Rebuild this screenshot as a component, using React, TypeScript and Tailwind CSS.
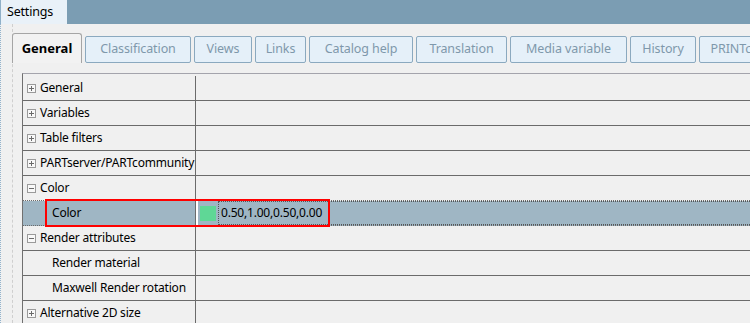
const tabs = [
  { label: "Classification", w: "w-[106px]" },
  { label: "Views", w: "w-[58px]" },
  { label: "Links", w: "w-[51px]" },
  { label: "Catalog help", w: "w-[104px]" },
  { label: "Translation", w: "w-[91px]" },
  { label: "Media variable", w: "w-[117px]" },
  { label: "History", w: "w-[66px]" },
  { label: "PRINTcatalog", w: "w-[100px]" },
];

type Row = {
  label: string;
  kind: "plus" | "minus" | "child";
  selected?: boolean;
  dottedBottom?: boolean;
};

const rows: Row[] = [
  { label: "General", kind: "plus" },
  { label: "Variables", kind: "plus" },
  { label: "Table filters", kind: "plus" },
  { label: "PARTserver/PARTcommunity", kind: "plus" },
  { label: "Color", kind: "minus", dottedBottom: true },
  { label: "Color", kind: "child", selected: true },
  { label: "Render attributes", kind: "minus" },
  { label: "Render material", kind: "child" },
  { label: "Maxwell Render rotation", kind: "child" },
  { label: "Alternative 2D size", kind: "plus" },
];

function Expander({ open }: { open: boolean }) {
  return (
    <svg width="9" height="9" viewBox="0 0 9 9" className="shrink-0">
      <rect x="0.5" y="0.5" width="8" height="8" fill="#f8f8f8" stroke="#9a9a9a" />
      <path d="M2 4.5h5" stroke="#6a6a6a" />
      {!open && <path d="M4.5 2v5" stroke="#6a6a6a" />}
    </svg>
  );
}

export default function App() {
  return (
    <div className="w-[750px] h-[323px] overflow-hidden bg-[#f0f0f0] font-['Noto_Sans',sans-serif] text-[12px] tracking-[-0.2px] text-black relative">
      {/* title bar */}
      <div className="h-[24px] bg-[#7b9db3] flex">
        <div className="w-[67px] bg-[#e9f1f8] flex items-center pl-[6px] text-[12.5px] border-l border-[#8fb0c8]">
          Settings
        </div>
      </div>

      <div className="flex h-[299px]">
        {/* window edge */}
        <div className="w-[12px] shrink-0 border-l border-dotted border-[#93b3cc]" />
        <div className="flex-1 flex flex-col border-l border-dashed border-[#cfcfcf] min-w-0">
          {/* tabs */}
          <div className="h-[39px] shrink-0 pt-[9px] flex items-start -ml-[1px] overflow-hidden">
            <div className="w-[70px] h-[30px] shrink-0 rounded-t-[3px] border border-b-0 border-[#a5a5a5] bg-[#f2f2f2] flex items-center justify-center font-bold text-[13px] tracking-normal">
              General
            </div>
            {tabs.map((t) => (
              <div
                key={t.label}
                className={`${t.w} h-[27px] mt-[3px] ml-[3px] shrink-0 rounded-[2px] border border-[#8ba9bf] bg-[#e5f0f9] flex items-center justify-center text-[#7f98ab] text-[12.5px] tracking-[-0.1px] whitespace-nowrap`}
              >
                {t.label}
              </div>
            ))}
          </div>

          {/* property grid */}
          <div className="ml-[9px] mt-[10px] border-t border-l border-[#a4a4ac] border-l-[#707070] flex-1 min-h-0 overflow-hidden pt-[2px]">
            {rows.map((r, i) => (
              <div
                key={i}
                className={`h-[25px] flex border-b border-[#6b6b6b] ${
                  r.dottedBottom || r.selected ? "border-dotted" : ""
                } ${r.selected ? "bg-[#9fb6c4]" : ""}`}
              >
                <div
                  className={`w-[172px] shrink-0 flex items-center whitespace-nowrap ${
                    r.kind === "child" ? "pl-[29px]" : "pl-[4px]"
                  }`}
                >
                  {r.kind !== "child" && <Expander open={r.kind === "minus"} />}
                  <span className={r.kind === "child" ? "" : "ml-[4px]"}>{r.label}</span>
                </div>
                <div className="w-[1px] bg-[#6b6b6b] shrink-0" />
                {r.selected ? (
                  <div className="flex-1 flex items-center">
                    <div className="w-[2px] self-stretch bg-white" />
                    <div className="w-[16px] h-[15px] ml-[2px] bg-[#5fd796]" />
                    <div className="flex-1 self-stretch ml-[2px] border-l border-t border-b border-dotted border-[#555] flex items-center pl-[2px]">
                      0.50,1.00,0.50,0.00
                    </div>
                  </div>
                ) : (
                  <div className="flex-1" />
                )}
              </div>
            ))}
          </div>
        </div>
      </div>

      {/* highlight annotation */}
      <div className="absolute left-[45px] top-[199px] w-[285px] h-[28px] border-2 border-[#ff0000] pointer-events-none" />
    </div>
  );
}
